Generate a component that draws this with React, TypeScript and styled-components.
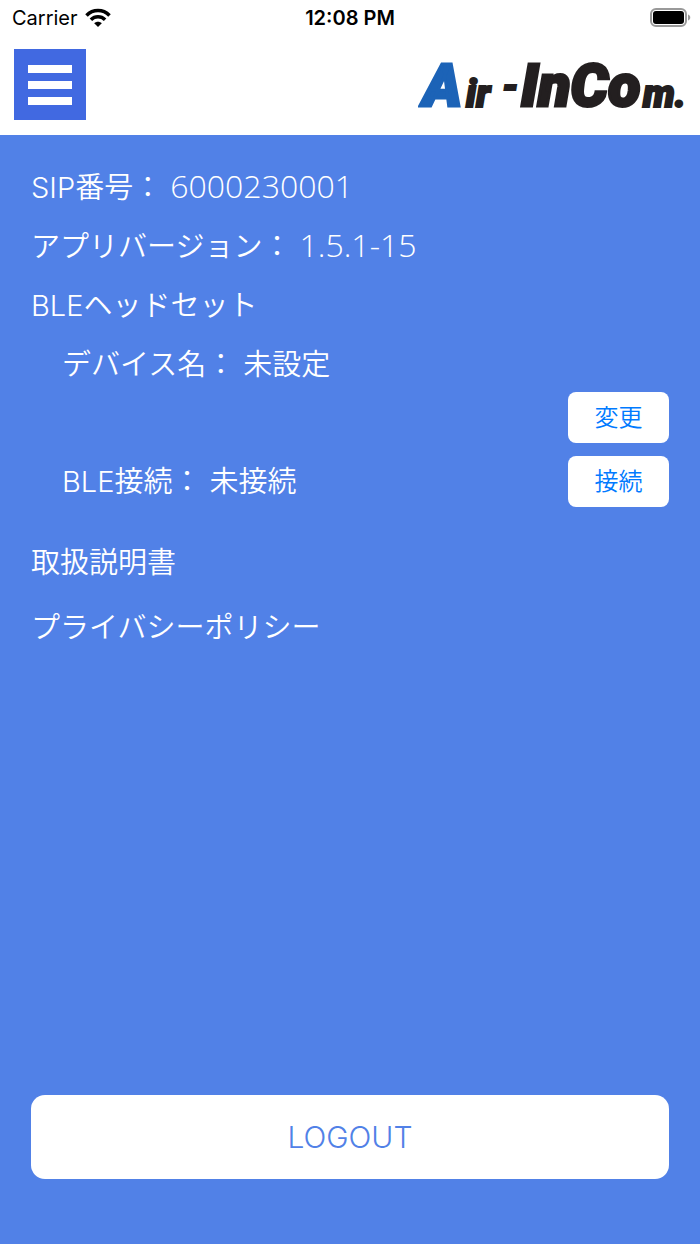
import React from "react";
import styled, { createGlobalStyle } from "styled-components";

const GlobalStyle = createGlobalStyle`
  *, *::before, *::after { box-sizing: border-box; }
  body {
    margin: 0;
    background: #5181e7;
    font-family: "Inter", "Noto Sans CJK JP", sans-serif;
  }
  button { font-family: inherit; border: 0; cursor: pointer; }
`;

const Screen = styled.div`
  display: flex;
  flex-direction: column;
  min-height: 100vh;
`;

const StatusBar = styled.div`
  display: grid;
  grid-template-columns: 1fr auto 1fr;
  align-items: center;
  height: 36px;
  padding: 0 9px;
  background: #fff;
  color: #000;
  font-size: 20px;
  line-height: 24px;
`;

const Carrier = styled.span`
  display: flex;
  align-items: center;
  gap: 7px;
  padding-left: 3px;
`;

const Clock = styled.time`
  font-weight: 600;
`;

const Battery = styled.svg`
  justify-self: end;
`;

const Header = styled.header`
  display: flex;
  align-items: center;
  justify-content: space-between;
  height: 99px;
  padding: 0 14px 2px;
  background: #fff;
`;

const MenuButton = styled.button`
  display: flex;
  flex-direction: column;
  justify-content: center;
  gap: 8px;
  width: 72px;
  height: 71px;
  padding: 0 14px;
  background: #4169e1;
`;

const MenuBar = styled.span`
  height: 8px;
  background: #fff;
`;

const Main = styled.main`
  display: flex;
  flex: 1;
  flex-direction: column;
  padding: 33px 31px 65px;
  background: #5181e7;
  color: #fff;
  font-size: 29px;
  font-weight: 350;
  line-height: 40px;
`;

const InfoList = styled.div`
  display: flex;
  flex-direction: column;
  gap: 19px;
`;

const Line = styled.p<{ $indent?: boolean }>`
  height: 40px;
  margin: 0;
  padding-left: ${(p) => (p.$indent ? 31 : 0)}px;
  white-space: pre;
`;

const Digits = styled.span`
  font-family: "Open Sans", "Noto Sans", sans-serif;
  font-size: 32px;
  line-height: 32px;
`;

const Actions = styled.div`
  display: flex;
  flex-direction: column;
  gap: 13px;
  margin-top: 7px;
`;

const ActionRow = styled.div`
  display: flex;
  align-items: center;
  justify-content: space-between;
`;

const SmallButton = styled.button`
  width: 101px;
  height: 51px;
  margin-left: auto;
  padding: 0;
  border-radius: 8px;
  background: #fff;
  color: #007aff;
  font-size: 24px;
  font-weight: 350;
  line-height: 32px;
`;

const Links = styled.nav`
  display: flex;
  flex-direction: column;
  align-items: flex-start;
  gap: 25px;
  margin-top: 36px;
`;

const PageLink = styled.a`
  color: #fff;
  text-decoration: none;
`;

const LogoutButton = styled.button`
  height: 84px;
  margin-top: auto;
  border-radius: 14px;
  background: #fff;
  color: #5181e7;
  font-size: 30px;
  font-weight: 300;
  line-height: 40px;
`;

const LogoText = styled.text<{ $small?: boolean; $color?: string }>`
  fill: ${(p) => p.$color ?? "#231f20"};
  stroke: ${(p) => p.$color ?? "#231f20"};
  stroke-width: ${(p) => (p.$small ? 2 : 3)}px;
  font-family: "Roboto", sans-serif;
  font-size: ${(p) => (p.$small ? 38 : 59)}px;
  font-style: italic;
  font-weight: 900;
`;

function WifiIcon() {
  return (
    <svg width="26" height="20" viewBox="0 0 26 20" aria-hidden="true">
      <g fill="none" stroke="#000" strokeWidth="3.6">
        <path d="M1.5 7.4C8 .9 18 .9 24.500 7.400" />
        <path d="M5.900 11.700C10 7.800 16 7.800 20.100 11.700" />
      </g>
      <path d="M9.200 15.200C11.400 13.200 14.600 13.200 16.800 15.200L13 19Z" fill="#000" />
    </svg>
  );
}

function Logo() {
  return (
    <svg width="268" height="80" viewBox="0 0 268 80" role="img" aria-label="Air-InCom.">
      <LogoText x="5" y="61" $color="#1c63b7">A</LogoText>
      <LogoText x="48" y="62" $small>ir</LogoText>
      <LogoText x="84" y="54" $small>-</LogoText>
      <LogoText x="103" y="61">InCo</LogoText>
      <LogoText x="225" y="62" $small>m.</LogoText>
    </svg>
  );
}

export default function App() {
  return (
    <Screen>
      <GlobalStyle />
      <StatusBar>
        <Carrier>
          Carrier
          <WifiIcon />
        </Carrier>
        <Clock>12:08 PM</Clock>
        <Battery width="42" height="20" viewBox="0 0 42 20" aria-hidden="true">
          <rect x="2" y="1" width="35" height="17" rx="5" fill="#fff" stroke="#999" strokeWidth="2" />
          <rect x="4" y="3" width="31" height="13" rx="3" fill="#000" />
          <path d="M39 6.500C42 7.500 42 11.500 39 12.500Z" fill="#999" />
        </Battery>
      </StatusBar>
      <Header>
        <MenuButton type="button" aria-label="メニュー">
          <MenuBar />
          <MenuBar />
          <MenuBar />
        </MenuButton>
        <Logo />
      </Header>
      <Main>
        <InfoList>
          <Line>SIP番号： <Digits>6000230001</Digits></Line>
          <Line>アプリバージョン： <Digits>1.5.1-15</Digits></Line>
          <Line>BLEヘッドセット</Line>
          <Line $indent>デバイス名： 未設定</Line>
        </InfoList>
        <Actions>
          <ActionRow>
            <SmallButton type="button">変更</SmallButton>
          </ActionRow>
          <ActionRow>
            <Line $indent>BLE接続： 未接続</Line>
            <SmallButton type="button">接続</SmallButton>
          </ActionRow>
        </Actions>
        <Links>
          <PageLink href="#manual">取扱説明書</PageLink>
          <PageLink href="#privacy">プライバシーポリシー</PageLink>
        </Links>
        <LogoutButton type="button">LOGOUT</LogoutButton>
      </Main>
    </Screen>
  );
}
